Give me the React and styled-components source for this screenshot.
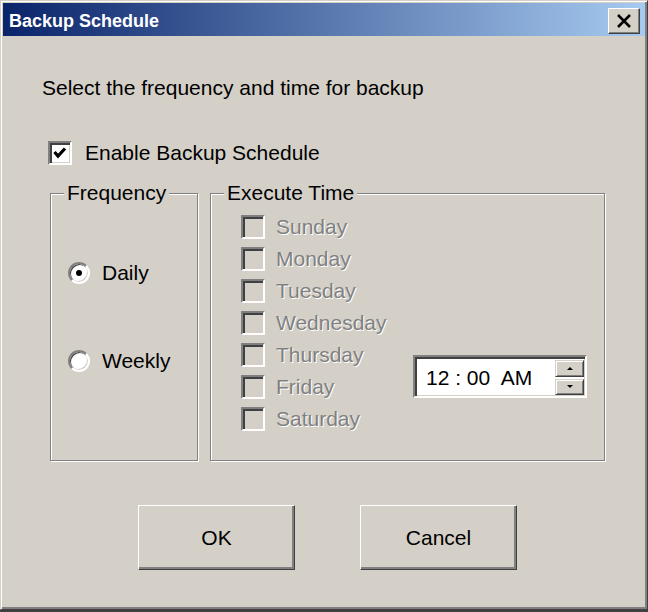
import React from "react";
import styled, { createGlobalStyle } from "styled-components";

const GlobalStyle = createGlobalStyle`
  html, body {
    margin: 0;
    padding: 0;
    background: #404040;
  }
  body {
    font-family: "Liberation Sans", Arial, sans-serif;
  }
`;

const Window = styled.div`
  box-sizing: border-box;
  width: 648px;
  height: 610px;
  background: #d4d0c8;
  border: 1px solid;
  border-color: #d4d0c8 #404040 #404040 #d4d0c8;
  box-shadow: inset 1px 1px 0 #fff, inset -2px -2px 0 #808080;
  padding: 2px;
  display: flex;
  flex-direction: column;
`;

const TitleBar = styled.div`
  height: 33px;
  flex: none;
  box-sizing: border-box;
  padding: 2px 5px 0 6px;
  display: flex;
  align-items: center;
  justify-content: space-between;
  background: linear-gradient(to right, #0a246a, #a6caf0);
`;

const Title = styled.span`
  color: #fff;
  font-weight: bold;
  font-size: 18px;
  line-height: 22px;
`;

const CloseButton = styled.div`
  box-sizing: border-box;
  width: 32px;
  height: 26px;
  background: #d4d0c8;
  border: 1px solid;
  border-color: #fff #404040 #404040 #fff;
  box-shadow: inset -1px -1px 0 #808080;
  display: flex;
  align-items: center;
  justify-content: center;
`;

const Body = styled.div`
  padding: 40px 0 0 39px;
  display: flex;
  flex-direction: column;
  font-size: 21px;
  line-height: 24px;
  color: #000;
`;

const Prompt = styled.p`
  margin: 0;
`;

const CheckRow = styled.label`
  display: flex;
  align-items: center;
  gap: ${(p) => p.$gap || 12}px;
  height: 24px;
  margin: ${(p) => p.$margin || "0"};
  color: ${(p) => (p.$disabled ? "#808080" : "#000")};
  text-shadow: ${(p) => (p.$disabled ? "1px 1px 0 #fff" : "none")};
`;

const Box = styled.span`
  box-sizing: border-box;
  width: 24px;
  height: 24px;
  flex: none;
  border: 2px solid;
  border-color: #808080 #fff #fff #808080;
  box-shadow: inset 2px 2px 0 #404040, inset -1px -1px 0 #d4d0c8;
  background: ${(p) => (p.$disabled ? "#d4d0c8" : "#fff")};
  display: flex;
  align-items: center;
  justify-content: center;
`;

const GroupRow = styled.div`
  display: flex;
  gap: 12px;
  margin: 28px 0 0 8px;
`;

const Group = styled.div`
  position: relative;
  box-sizing: border-box;
  width: ${(p) => p.$width}px;
  height: 268px;
  border: 1px solid #808080;
  box-shadow: inset 1px 1px 0 #fff, 1px 1px 0 #fff;
`;

const Legend = styled.span`
  position: absolute;
  top: -13px;
  left: 13px;
  padding: 0 3px;
  background: #d4d0c8;
  line-height: 24px;
`;

const RadioList = styled.div`
  display: flex;
  flex-direction: column;
  gap: 66px;
  padding: 68px 0 0 17px;
`;

const RadioRow = styled.label`
  display: flex;
  align-items: center;
  gap: 12px;
  height: 22px;
`;

const RadioDot = styled.span`
  position: relative;
  box-sizing: border-box;
  width: 22px;
  height: 22px;
  flex: none;
  border-radius: 50%;
  border: 2px solid;
  border-color: #808080 #fff #fff #808080;
  box-shadow: inset 1px 1px 0 #404040, inset -1px -1px 0 #d4d0c8;
  background: #fff;

  &::after {
    content: "";
    display: ${(p) => (p.$checked ? "block" : "none")};
    position: absolute;
    left: 6px;
    top: 6px;
    width: 6px;
    height: 6px;
    border-radius: 50%;
    background: #000;
  }
`;

const ExecuteBody = styled.div`
  display: grid;
  grid-template-columns: 172px 1fr;
  align-items: start;
  padding: 21px 0 0 30px;
`;

const DayList = styled.div`
  display: flex;
  flex-direction: column;
  gap: 8px;
`;

const TimePicker = styled.div`
  box-sizing: border-box;
  width: 174px;
  height: 43px;
  margin-top: 140px;
  border: 2px solid;
  border-color: #808080 #fff #fff #808080;
  box-shadow: inset 2px 2px 0 #404040, inset -1px -1px 0 #d4d0c8;
  background: #fff;
  display: flex;
  align-items: center;
`;

const TimeText = styled.span`
  padding: 2px 0 0 11px;
  white-space: pre;
`;

const Spin = styled.div`
  box-sizing: border-box;
  margin-left: auto;
  width: 30px;
  height: 100%;
  padding: 3px 1px 1px 0;
  display: flex;
  flex-direction: column;
  gap: 2px;
`;

const SpinButton = styled.div`
  flex: 1;
  box-sizing: border-box;
  background: #d4d0c8;
  border: 1px solid;
  border-color: #d4d0c8 #404040 #404040 #d4d0c8;
  box-shadow: inset 1px 1px 0 #fff, inset -1px -1px 0 #808080;
  display: flex;
  align-items: center;
  justify-content: center;

  &::after {
    content: "";
    width: 0;
    height: 0;
    border-left: 3px solid transparent;
    border-right: 3px solid transparent;
    ${(p) =>
      p.$down ? "border-top: 3px solid #000;" : "border-bottom: 3px solid #000;"}
  }
`;

const ButtonRow = styled.div`
  display: flex;
  gap: 65px;
  margin: 44px 0 0 96px;
`;

const Button = styled.button`
  box-sizing: border-box;
  width: 157px;
  height: 65px;
  padding: 0;
  background: #d4d0c8;
  border: 1px solid;
  border-color: #fff #404040 #404040 #fff;
  box-shadow: inset -2px -2px 0 #808080;
  font-family: inherit;
  font-size: 21px;
  color: #000;
`;

const CheckMark = () => (
  <svg width="20" height="20" viewBox="0 0 20 20">
    <path d="M4.5 9 L8 13 L15 5.5" fill="none" stroke="#000" strokeWidth="3.2" />
  </svg>
);

const CloseIcon = () => (
  <svg width="16" height="14" viewBox="0 0 16 14">
    <path d="M2 1 L14 13 M14 1 L2 13" stroke="#000" strokeWidth="2.6" />
  </svg>
);

const days = ["Sunday", "Monday", "Tuesday", "Wednesday", "Thursday", "Friday", "Saturday"];

export default function App() {
  return (
    <>
      <GlobalStyle />
      <Window>
        <TitleBar>
          <Title>Backup Schedule</Title>
          <CloseButton>
            <CloseIcon />
          </CloseButton>
        </TitleBar>
        <Body>
          <Prompt>Select the frequency and time for backup</Prompt>
          <CheckRow $margin="41px 0 0 6px" $gap={13}>
            <Box>
              <CheckMark />
            </Box>
            Enable Backup Schedule
          </CheckRow>
          <GroupRow>
            <Group $width={148}>
              <Legend>Frequency</Legend>
              <RadioList>
                <RadioRow>
                  <RadioDot $checked />
                  Daily
                </RadioRow>
                <RadioRow>
                  <RadioDot />
                  Weekly
                </RadioRow>
              </RadioList>
            </Group>
            <Group $width={395}>
              <Legend>Execute Time</Legend>
              <ExecuteBody>
                <DayList>
                  {days.map((d) => (
                    <CheckRow key={d} $disabled $gap={11}>
                      <Box $disabled />
                      {d}
                    </CheckRow>
                  ))}
                </DayList>
                <TimePicker>
                  <TimeText>{"12 : 00  AM"}</TimeText>
                  <Spin>
                    <SpinButton />
                    <SpinButton $down />
                  </Spin>
                </TimePicker>
              </ExecuteBody>
            </Group>
          </GroupRow>
          <ButtonRow>
            <Button>OK</Button>
            <Button>Cancel</Button>
          </ButtonRow>
        </Body>
      </Window>
    </>
  );
}
